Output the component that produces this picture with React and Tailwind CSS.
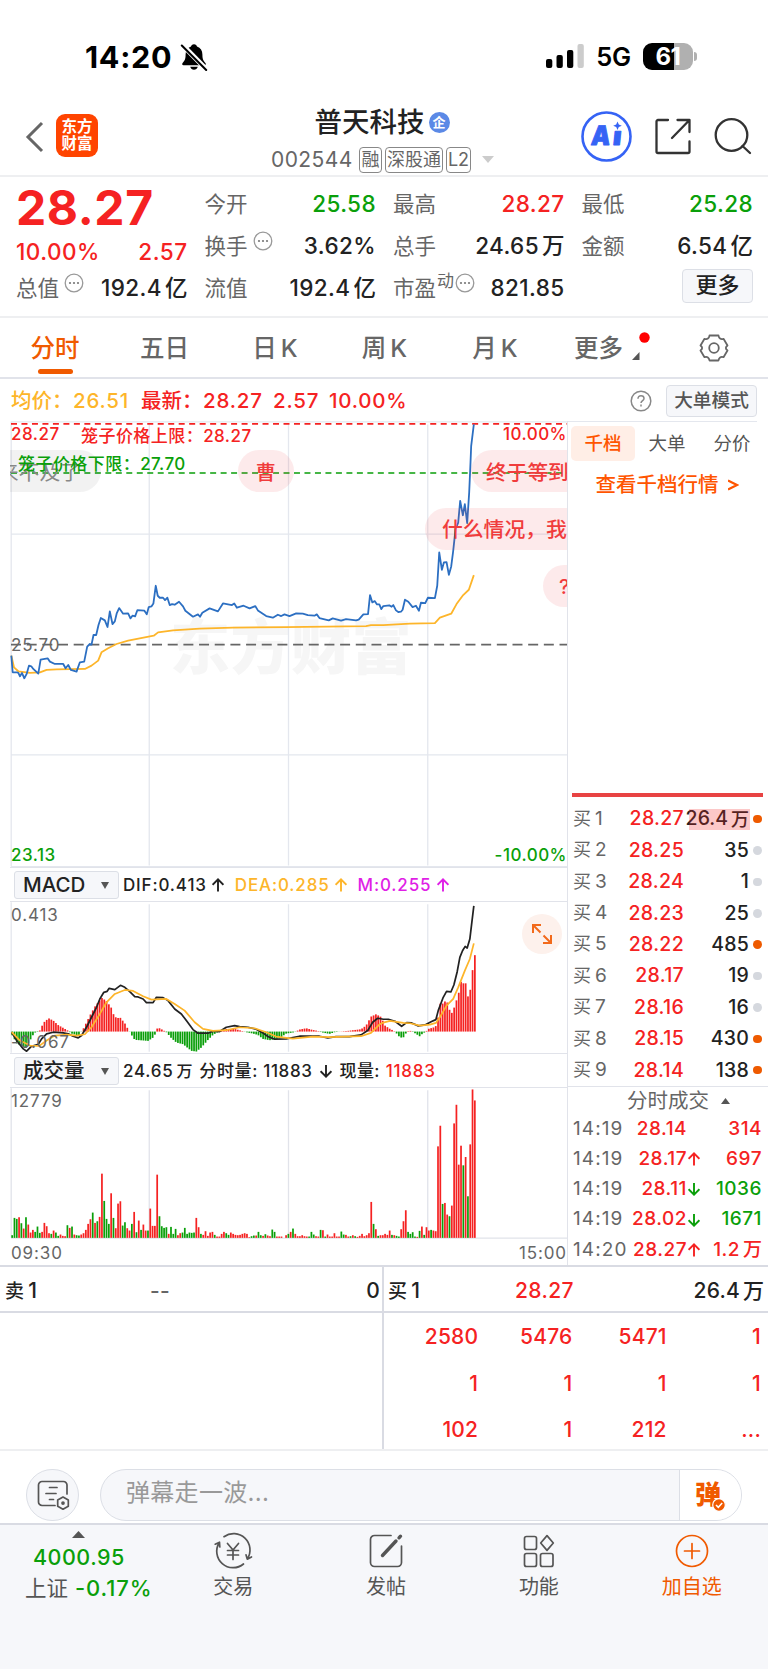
import React from "react";

const RED = "#f52222";
const GREEN = "#0a9f0a";

/* ---------- chart data (drawn in a 3x grid) ---------- */

const PRICE =
  "34,830 38,880 50,880 55,882 60,892 66,882 73,898 80,885 87,860 94,862 100,870 115,884 122,842 143,838 150,848 165,855 190,855 197,868 205,858 213,873 230,878 240,850 253,848 262,803 270,795 275,797 281,768 289,768 296,738 303,717 315,724 323,744 330,697 338,735 345,727 351,702 358,687 370,704 385,703 392,718 398,710 406,712 413,693 434,695 441,706 447,684 455,682 461,673 468,620 474,650 480,656 490,656 496,663 503,656 510,678 517,675 525,677 538,668 550,682 557,695 580,713 595,706 601,713 608,701 630,688 655,697 670,673 697,678 704,673 712,686 732,680 750,688 767,681 775,694 800,711 820,716 835,707 845,711 855,706 870,711 890,703 910,704 925,708 945,710 952,706 960,717 988,724 1000,718 1025,725 1040,720 1070,724 1078,722 1092,706 1106,705 1112,648 1119,670 1126,666 1133,676 1140,676 1146,690 1152,681 1170,679 1177,683 1182,678 1190,694 1197,699 1205,698 1210,692 1217,662 1227,668 1240,684 1250,680 1259,695 1265,671 1278,672 1286,656 1307,657 1314,620 1320,520 1328,572 1334,550 1342,549 1349,587 1356,562 1362,515 1369,450 1377,430 1383,365 1391,408 1397,375 1404,432 1410,340 1414,250 1416,200 1424,135";
const AVERAGE =
  "34,830 42,865 55,877 90,882 120,880 140,873 170,871 255,870 275,860 295,845 305,820 325,808 350,795 385,785 462,770 475,760 520,754 600,749 700,746 860,744 1100,741 1115,738 1152,738 1232,734 1307,732 1322,716 1356,704 1372,675 1392,648 1409,632 1424,588";
const DIF =
  "35,520 52,548 70,570 80,577 95,562 115,556 125,540 140,525 160,520 190,522 205,525 220,532 235,537 245,530 260,505 275,475 290,445 300,420 312,400 322,397 328,388 345,392 362,379 375,385 390,398 405,413 415,414 430,420 440,431 460,431 470,415 490,416 505,425 525,450 545,465 560,485 580,512 595,523 625,523 640,517 660,518 680,505 705,500 720,503 745,505 770,511 790,522 805,533 825,541 860,540 900,532 960,532 985,537 1010,533 1050,533 1085,528 1105,515 1120,490 1135,478 1152,481 1167,481 1187,487 1207,502 1222,491 1237,492 1257,501 1277,498 1297,488 1310,482 1317,455 1332,415 1342,397 1355,399 1364,378 1374,338 1382,295 1390,275 1398,262 1404,267 1412,240 1418,190 1424,140";
const DEA =
  "35,520 60,545 90,560 118,561 140,545 165,530 200,527 230,530 255,526 275,505 300,465 320,430 345,405 375,393 400,396 430,412 455,422 500,420 525,435 555,455 585,490 610,510 640,516 680,514 720,505 765,508 800,520 830,533 880,539 940,533 990,535 1085,532 1115,522 1140,497 1152,491 1172,486 1212,492 1232,493 1262,500 1292,497 1310,492 1322,475 1342,440 1362,420 1377,385 1397,335 1412,300 1424,253";

const HIST = [
  [36, -10], [50, -35], [77, -50], [84, -38], [98, -12], [105, -3], [118, 0], [125, 15], [132, 28], [146, 40],
  [160, 33], [174, 20], [188, 12], [202, 4], [215, -6], [236, -12], [243, -2], [250, 8], [257, 22], [271, 50],
  [285, 75], [298, 92], [306, 101], [320, 92], [334, 72], [341, 52], [350, 40], [361, 42], [375, 25], [382, 12],
  [389, 0], [395, -10], [405, -25], [420, -26], [445, -28], [460, -18], [468, -5], [472, 9], [480, 10], [492, 3],
  [500, -2], [515, -20], [530, -33], [550, -38], [575, -58], [590, -60], [605, -48], [625, -25], [640, -10], [652, -3],
  [665, 2], [680, 8], [705, 8], [720, 4], [740, -2], [760, -6], [775, -10], [790, -22], [810, -26], [840, -20],
  [860, -6], [885, -2], [900, 6], [920, 10], [935, 6], [955, 2], [965, -2], [990, -7], [1005, -2], [1030, 1],
  [1045, 2], [1060, 4], [1085, 7], [1100, 18], [1115, 45], [1130, 52], [1145, 44], [1157, 18], [1172, 8], [1184, 2],
  [1192, -6], [1202, -18], [1212, -18], [1220, -5], [1227, 2], [1234, 2], [1244, -3], [1261, -14], [1270, -6], [1280, 0],
  [1287, 8], [1302, 12], [1312, 18], [1316, 40], [1323, 84], [1330, 84], [1342, 95], [1349, 68], [1358, 56], [1366, 75],
  [1379, 118], [1385, 150], [1392, 145], [1400, 145], [1406, 105], [1413, 124], [1420, 184], [1428, 236],
];

const VOLUME =
  "g8 g60 g57 r62 g44 r28 g62 r40 r16 r24 g18 g34 g15 r18 r45 r35 r14 g12 r22 g16 g6 r10 r6 r5 g38 r30 g34 r10 g8 g7 r10 r14 r24 r42 r56 g76 r45 g50 r63 r193 g111 g57 g42 r134 g60 r29 r103 r110 g37 g47 r29 r22 g42 r78 g17 r52 g24 r40 r22 g22 r88 r36 r36 r190 g65 g35 g30 g32 r12 g33 g12 g27 r8 r14 g16 g30 g12 g16 g15 g16 r60 r32 g12 r9 r20 r6 r16 r18 g9 r4 r4 r12 r18 g14 g9 r16 r12 r9 r8 r9 r12 r14 r12 r2 g5 g7 r7 g18 g8 r6 g11 r7 r5 g25 g18 r4 r4 r4 r0 r8 g12 r18 g28 r12 r5 r5 r8 r5 r4 g4 g18 g10 r5 r4 g24 r23 g4 r10 r4 r4 r14 r4 r4 g19 g10 r9 r4 g5 r8 g5 r3 r6 r12 r5 r8 r14 r108 g42 r26 g6 r8 r8 r12 r9 r22 g9 r8 g6 g4 r26 r50 r83 g18 g12 g17 g4 r3 g21 r34 g9 r32 r22 g24 r22 r20 r275 r337 g102 r105 r70 g65 r97 r344 r400 r220 r277 g218 r243 g125 r281 r446 r413"
    .split(" ")
    .map((s) => ({ up: s[0] === "r", h: Number(s.slice(1)) }));

function histAt(x) {
  for (let i = 1; i < HIST.length; i++) {
    const [x1, v1] = HIST[i];
    if (x <= x1) {
      const [x0, v0] = HIST[i - 1];
      return v0 + ((v1 - v0) * (x - x0)) / (x1 - x0);
    }
  }
  return HIST[HIST.length - 1][1];
}

/* ---------- small pieces ---------- */

function Unit({ n, u }) {
  return (
    <span className="flex items-center">
      {n}
      <span className="ml-[3px] tracking-normal">{u}</span>
    </span>
  );
}

function Dots() {
  return (
    <svg className="mb-[10px] ml-[5px] h-5 w-5" viewBox="0 0 20 20">
      <circle cx="10" cy="10" r="8.8" fill="none" stroke="#999" strokeWidth="1.3" />
      <circle cx="6" cy="10" r="1.1" fill="#777" />
      <circle cx="10" cy="10" r="1.1" fill="#777" />
      <circle cx="14" cy="10" r="1.1" fill="#777" />
    </svg>
  );
}

function Stat({ label, children, extra, color = "text-[#222]" }) {
  return (
    <div className="flex h-[42px] items-center">
      <span className="text-[21.5px] text-[#666]">{label}</span>
      {extra}
      <span className={"ml-auto text-[22.5px] font-medium tracking-[0.4px] " + color}>{children}</span>
    </div>
  );
}

function Arrow({ down, className = "" }) {
  return (
    <svg className={"h-[14px] w-[12px] " + className} viewBox="0 0 12 14" fill="none" stroke="currentColor" strokeWidth="1.9">
      {down ? <path d="M6 1v11.500M.6 7.200L6 12.600l5.400-5.400" /> : <path d="M6 13.500V2M.6 6.800L6 1.400l5.400 5.400" />}
    </svg>
  );
}

function Selector({ label }) {
  return (
    <div className="ml-[4px] flex h-[28px] w-[105px] items-center justify-between rounded-[3px] border border-[#dcdfe6] bg-[#f6f7fa] pr-[9px] pl-2 text-[20.5px] font-medium tracking-normal text-[#222]">
      <span>{label}</span>
      <svg className="h-[7px] w-[8px]" viewBox="0 0 8 7">
        <path d="M0 0h8L4 7z" fill="#555" />
      </svg>
    </div>
  );
}

/* ---------- page sections ---------- */

function StatusBar() {
  return (
    <div className="flex h-[94px] items-center pt-[20px] pr-[71px] pl-[85px] text-black">
      <span className="text-[30.5px] font-bold tracking-[0.700px]">14:20</span>
      <svg className="ml-[8px] h-[28px] w-[28px]" viewBox="0 0 28 28">
        <path d="M14 1.2c-1.700 0-2.800 1-3 2.400C7.400 4.800 5.600 7.900 5.600 11.500c0 5-1.300 6.700-3 8.400-.8.900-.4 2.300.9 2.300h21c1.300 0 1.700-1.400.9-2.300-1.700-1.700-3-3.400-3-8.400 0-3.600-1.800-6.700-5.400-7.900-.2-1.400-1.300-2.400-3-2.400zM10.200 23.800c.6 1.900 2 3 3.800 3s3.200-1.100 3.800-3z" />
        <path d="M2 1.500l25 25.500" stroke="#fff" strokeWidth="5" />
        <path d="M1.800 2.500L26.200 27" stroke="#000" strokeWidth="2" strokeLinecap="round" />
      </svg>
      <svg className="ml-auto h-[26px] w-[38px]" viewBox="0 0 38 26">
        <rect x="0" y="15" width="6.300" height="9" rx="2" />
        <rect x="10.500" y="11" width="6.300" height="13" rx="2" />
        <rect x="21" y="6" width="6.300" height="18" rx="2" />
        <rect x="31.500" y="0" width="6.300" height="24" rx="2" fill="#ccc" />
      </svg>
      <span className="ml-[12px] text-[25.500px] font-semibold tracking-[-0.200px]">5G</span>
      <div className="ml-[12px] flex h-[27px] w-[50px] items-center justify-center rounded-[9px] bg-[linear-gradient(90deg,#000_62%,#b0b0b0_62%)] text-[24px] font-bold tracking-[-0.5px] text-white">
        61
      </div>
      <div className="ml-[1px] h-[9px] w-[3px] rounded-r-full bg-[#b0b0b0]" />
    </div>
  );
}

function Header() {
  return (
    <div className="flex h-[83px] border-b-2 border-[#eeeff1]">
      <div className="flex w-[271px] items-start pt-[20px] pl-[25px]">
        <svg className="mt-[7px] h-[32px] w-[19px]" viewBox="0 0 19 32" fill="none" stroke="#666" strokeWidth="3">
          <path d="M17 2L3 16l14 14" />
        </svg>
        <div className="ml-[12px] flex h-[43px] w-[42px] flex-col items-center justify-center rounded-[9px] bg-[#ff4400] text-[15.5px] leading-[17px] font-bold text-white">
          <span>东方</span>
          <span>财富</span>
        </div>
      </div>
      <div className="flex w-[226px] flex-col items-center">
        <div className="mt-[11px] ml-[-4px] flex h-[36px] items-center text-[27.500px] font-medium text-[#222]">
          普天科技
          <span className="ml-[4px] flex h-[21px] w-[21px] items-center justify-center rounded-full bg-[#5b89e6] text-[13px] font-bold text-white">企</span>
        </div>
        <div className="mt-[3px] flex w-full items-center text-[20px] text-[#666]">
          <span className="w-[88px] text-[21px] tracking-[0.400px]">002544</span>
          <span className="flex h-[26px] w-[23px] items-center justify-center rounded-[4px] border-[1.500px] border-[#888] text-[18px]">融</span>
          <span className="ml-[3px] flex h-[26px] w-[58px] items-center justify-center rounded-[4px] border-[1.500px] border-[#888] text-[18px]">深股通</span>
          <span className="ml-[3px] flex h-[26px] w-[25px] items-center justify-center rounded-[4px] border-[1.500px] border-[#888] text-[18px]">L2</span>
          <svg className="ml-[11px] h-[7px] w-[12px]" viewBox="0 0 12 7">
            <path d="M0 0h12L6 7z" fill="#ccc" />
          </svg>
        </div>
      </div>
      <div className="ml-auto flex items-start pt-[17px] pr-[16px]">
        <svg className="h-[51px] w-[51px]" viewBox="0 0 51 51">
          <circle cx="25.500" cy="25.500" r="24" fill="none" stroke="#3563f5" strokeWidth="2.600" />
          <g fill="#3563f5" stroke="#3563f5" strokeWidth="1" strokeLinejoin="round" className="font-black">
            <text x="13" y="34" fontSize="27" textLength="19" lengthAdjust="spacingAndGlyphs" transform="skewX(-6)">A</text>
            <text x="35" y="34.500" fontSize="25" textLength="8.500" lengthAdjust="spacingAndGlyphs" transform="skewX(-6)">ı</text>
          </g>
          <path d="M36.500 10.500l1.300 3 3 1.300-3 1.300-1.300 3-1.300-3-3-1.300 3-1.300z" fill="#3563f5" />
        </svg>
        <svg className="ml-[22px] mt-[7px] h-[38px] w-[38px]" viewBox="0 0 38 38" fill="none" stroke="#333" strokeWidth="2.300" strokeLinecap="round" strokeLinejoin="round">
          <path d="M14 2H4a1.500 1.500 0 0 0-1.500 1.500v30A1.500 1.500 0 0 0 4 35h30a1.500 1.500 0 0 0 1.500-1.500V23.500M23.500 2h12v12M35 2.500L18 20" />
        </svg>
        <svg className="ml-[22px] mt-[6px] h-[38px] w-[38px]" viewBox="0 0 38 38" fill="none" stroke="#333" strokeWidth="2.300" strokeLinecap="round">
          <circle cx="17.500" cy="18" r="15.800" />
          <path d="M28.500 29l7.500 7" />
        </svg>
      </div>
    </div>
  );
}

function Quote() {
  return (
    <div className="grid h-[141px] grid-cols-4 gap-x-[17px] border-b-2 border-[#eeeff1] pt-[6px] pr-[15px] pl-[16px]">
      <div>
        <div className="h-[49px] pt-px text-[48px] leading-[48px] font-bold tracking-[0.600px] text-[#f52222]">28.27</div>
        <div className="flex h-[35px] items-center justify-between pt-[6px] text-[22.500px] font-medium tracking-[0.500px] text-[#f52222]">
          <span>10.00%</span>
          <span>2.57</span>
        </div>
        <Stat label="总值" extra={<Dots />}>
          <Unit n="192.4" u="亿" />
        </Stat>
      </div>
      <div>
        <Stat label="今开" color="text-[#0a9f0a]">25.58</Stat>
        <Stat label="换手" extra={<Dots />}>3.62%</Stat>
        <Stat label="流值">
          <Unit n="192.4" u="亿" />
        </Stat>
      </div>
      <div>
        <Stat label="最高" color="text-[#f52222]">28.27</Stat>
        <Stat label="总手">
          <Unit n="24.65" u="万" />
        </Stat>
        <Stat
          label="市盈"
          extra={
            <>
              <span className="mb-[13px] ml-px text-[17px] text-[#666]">动</span>
              <span className="-ml-[4px] flex">
                <Dots />
              </span>
            </>
          }
        >
          821.85
        </Stat>
      </div>
      <div>
        <Stat label="最低" color="text-[#0a9f0a]">25.28</Stat>
        <Stat label="金额">
          <Unit n="6.54" u="亿" />
        </Stat>
        <div className="ml-auto mt-[2px] flex h-[34px] w-[71px] items-center justify-center rounded-[4px] border border-[#dcdfe6] bg-[#f6f7fa] text-[22px] font-medium text-[#222]">更多</div>
      </div>
    </div>
  );
}

function Tabs() {
  return (
    <div className="flex h-[62px] border-b-2 border-[#e1e3ea] text-[24.500px] font-medium text-[#666]">
      <div className="flex w-[110px] flex-col items-center pt-[12px] text-[#f05a00]">
        <span className="h-[36px] leading-[36px]">分时</span>
        <span className="mt-[3px] h-[5px] w-[35px] rounded-full bg-[#f05a00]" />
      </div>
      <span className="w-[109px] pt-[12px] text-center leading-[36px]">五日</span>
      <span className="w-[112px] pt-[12px] text-center leading-[36px]">日<span className="ml-[4px]">K</span></span>
      <span className="w-[107px] pt-[12px] text-center leading-[36px]">周<span className="ml-[4px]">K</span></span>
      <span className="w-[114px] pt-[12px] text-center leading-[36px]">月<span className="ml-[4px]">K</span></span>
      <div className="flex w-[147px] pt-[12px] pl-[22px]">
        <span className="leading-[36px]">更多</span>
        <svg className="ml-[9px] h-[30px] w-[18px]" viewBox="0 0 18 30">
          <circle cx="12.500" cy="7.500" r="5.200" fill="#f00" />
          <path d="M7.500 22v8H0z" fill="#555" />
        </svg>
      </div>
      <svg className="mt-[16px] h-[28px] w-[30px]" viewBox="0 0 30 28" fill="none" stroke="#666" strokeWidth="1.800" strokeLinejoin="round">
        <path d="M10.500 1.500h9c.4 3 2.200 4.200 5 3.300l4 6.700c-2.200 1.600-2.200 3.400 0 5l-4 6.700c-2.800-.9-4.600.3-5 3.300h-9c-.4-3-2.200-4.200-5-3.300l-4-6.700c2.200-1.600 2.200-3.400 0-5l4-6.700c2.800.9 4.600-.3 5-3.300z" />
        <circle cx="15" cy="14" r="4.800" />
      </svg>
    </div>
  );
}

function InfoRow() {
  return (
    <div className="flex h-[42px] items-center pt-px pl-[11px] text-[20.500px] font-medium text-[#f52222]">
      <span className="w-[62px] whitespace-nowrap text-[#fdb52a]">均价：</span>
      <span className="w-[68px] tracking-[0.800px] text-[#fdb52a]">26.51</span>
      <span className="w-[62px] whitespace-nowrap">最新：</span>
      <span className="w-[70px] tracking-[0.800px]">28.27</span>
      <span className="w-[56px] tracking-[0.800px]">2.57</span>
      <span className="tracking-[0.800px]">10.00%</span>
      <svg className="mr-px ml-auto h-[22px] w-[22px]" viewBox="0 0 22 22" fill="none" stroke="#888" strokeWidth="1.500">
        <circle cx="11" cy="11" r="9.800" />
        <path d="M8 8.700c0-1.900 1.200-3 3-3s3 1.100 3 2.700c0 2.200-3 2.200-3 4.700" />
        <path d="M11 14.600v1.800" />
      </svg>
      <div className="mr-[11px] ml-[13px] flex h-[32px] w-[91px] items-center justify-center rounded-[4px] border border-[#dcdfe6] bg-[#f6f7fa] text-[18.700px] text-[#555]">大单模式</div>
    </div>
  );
}

function PriceChart() {
  return (
    <div className="relative h-[446px] overflow-hidden text-[17px] leading-[20px] font-medium tracking-[0.500px]">
      <div className="absolute top-[192px] left-[160px] text-[60px] leading-[68px] font-black tracking-[0.500px] text-[#f6f6f6]">东方财富</div>
      <svg className="absolute inset-0 h-full w-full" viewBox="10 422 558 446">
        <g stroke="#e4e7ee" strokeWidth="1.300" fill="none">
          <path d="M11.200 422v446M149.500 425v442M289 425v442M428.500 425v442M11 535h557M11 756h557M11 422.500h557M11 868h557" />
        </g>
        <path d="M11 424.500h557" stroke={RED} strokeWidth="1.600" strokeDasharray="6 4.500" />
        <path d="M11 473.700h557" stroke={GREEN} strokeWidth="1.600" strokeDasharray="6 4.500" />
        <path d="M11 645.700h557" stroke="#666" strokeWidth="1.800" strokeDasharray="10 5.700" />
        <g transform="translate(0 380) scale(.333333)" fill="none" strokeWidth="5.400" strokeLinejoin="round">
          <polyline points={AVERAGE} stroke="#fdb52a" />
          <polyline points={PRICE} stroke="#2c6fc2" />
        </g>
      </svg>
      <div className="absolute top-[29px] -left-[20px] flex h-[42px] w-[111px] items-center justify-end rounded-full bg-black/5 pt-[3px] pr-[20px] text-[20.800px] font-normal tracking-normal text-[#888]">来不及了</div>
      <div className="absolute top-[29px] left-[228px] flex h-[42px] w-[56px] items-center justify-center rounded-full bg-[#f0333a]/10 pt-[3px] text-[20px] text-[#f03c3c]">曹</div>
      <div className="absolute top-[29px] left-[461px] flex h-[42px] w-[140px] items-center rounded-full bg-[#f0333a]/10 pt-[3px] pl-[15px] text-[20.700px] tracking-normal text-[#f03c3c]">终于等到</div>
      <div className="absolute top-[87px] left-[415px] flex h-[42px] w-[200px] items-center rounded-full bg-[#f0333a]/10 pt-[2px] pl-[17px] text-[20.800px] tracking-normal whitespace-nowrap text-[#f03c3c]">什么情况，我</div>
      <div className="absolute top-[144px] left-[533px] flex h-[42px] w-[60px] items-center rounded-full bg-[#f0333a]/10 pt-[2px] pl-[16px] text-[20px] text-[#f03c3c]">?</div>
      <span className="absolute top-[3px] left-[1px] text-[#f52222]">28.27</span>
      <span className="absolute top-[5px] left-[71px] tracking-[0.450px] whitespace-nowrap text-[#f52222]">笼子价格上限：28.27</span>
      <span className="absolute top-[33px] left-[8px] tracking-[0.450px] whitespace-nowrap text-[#0a9f0a]">笼子价格下限：27.70</span>
      <span className="absolute top-[3px] right-0 text-[#f52222]">10.00%</span>
      <span className="absolute top-[214px] left-[1px] font-normal tracking-[0.900px] text-[#666]">25.70</span>
      <span className="absolute bottom-[2px] left-[1px] text-[#0a9f0a]">23.13</span>
      <span className="absolute right-0 bottom-[2px] text-[#0a9f0a]">-10.00%</span>
    </div>
  );
}

function MacdPanel() {
  const bars = [];
  for (let i = 0; i < 202; i++) {
    const x = 36.5 + 6.918 * i;
    bars.push({ x, v: histAt(x) });
  }
  return (
    <>
      <div className="flex h-[35px] items-center border-y-[1.500px] border-[#e1e3ea] pt-px text-[17px] font-medium tracking-[0.850px] text-[#222]">
        <Selector label="MACD" />
        <span className="ml-[4px]">DIF:0.413</span>
        <Arrow className="ml-[5px]" />
        <span className="ml-[11px] text-[#fdb52a]">DEA:0.285</span>
        <Arrow className="ml-[5px] text-[#fdb52a]" />
        <span className="ml-[11px] text-[#df1fe6]">M:0.255</span>
        <Arrow className="ml-[6px] text-[#df1fe6]" />
      </div>
      <div className="relative h-[151px] text-[17px] leading-[20px] tracking-[0.900px] text-[#666]">
        <svg className="absolute inset-0 h-full w-full" viewBox="10 903 558 151">
          <path d="M11.200 903v151M149.500 905v148M289 905v148M428.500 905v148" stroke="#e4e7ee" strokeWidth="1.300" />
          <g transform="translate(0 860) scale(.333333)">
            {bars.map((b, i) => (
              <rect key={i} x={b.x - 2.5} width="5.200" y={b.v > 0 ? 518 - b.v : 518} height={Math.abs(b.v)} fill={b.v > 0 ? RED : GREEN} />
            ))}
            <g fill="none" strokeWidth="5.200" strokeLinejoin="round">
              <polyline points={DIF} stroke="#222" />
              <polyline points={DEA} stroke="#fdb52a" />
            </g>
          </g>
        </svg>
        <span className="absolute top-[3px] left-[1px]">0.413</span>
        <span className="absolute bottom-[1px] left-[1px]">-0.067</span>
        <div className="absolute top-[12px] right-[5px] flex h-[40px] w-[40px] items-center justify-center rounded-full bg-[#fdf1ec]">
          <svg className="h-5 w-5" viewBox="0 0 20 20" fill="none" stroke="#f26a1b" strokeWidth="2">
            <path d="M1 9V1h8M1.500 1.500l7 7M19 11v8h-8M18.500 18.500l-7-7" />
          </svg>
        </div>
      </div>
    </>
  );
}

function VolumePanel() {
  return (
    <>
      <div className="flex h-[35px] items-center border-y-[1.500px] border-[#e1e3ea] pt-px text-[17px] font-medium tracking-[0.750px] whitespace-nowrap text-[#222]">
        <Selector label="成交量" />
        <span className="ml-[4px]">24.65</span>
        <span className="ml-[3px] text-[16px]">万</span>
        <span className="ml-[6px] tracking-[0.650px]">分时量: 11883</span>
        <Arrow down className="ml-[7px]" />
        <span className="ml-[8px] tracking-[0.300px]">现量:</span>
        <span className="ml-[6px] text-[#f52222]">11883</span>
      </div>
      <div className="relative h-[151px] text-[17px] leading-[20px] tracking-[0.900px] text-[#666]">
        <svg className="absolute inset-0 h-full w-full" viewBox="10 1089 558 151">
          <path d="M11.200 1089v150M149.500 1091v148M289 1091v148M428.500 1091v148M11 1239.300h557" stroke="#e1e3ea" strokeWidth="1.300" />
          <g transform="translate(0 1050) scale(.333333)">
            {VOLUME.map((b, i) => (
              <rect key={i} x={36.5 + 6.918 * i - 2.6} width="5.200" y={567 - b.h} height={b.h} fill={b.up ? RED : GREEN} />
            ))}
          </g>
        </svg>
        <span className="absolute top-[3px] left-[1px]">12779</span>
      </div>
      <div className="flex h-[26px] items-center justify-between pt-[2px] pl-[1px] text-[17px] tracking-[0.900px] text-[#666]">
        <span>09:30</span>
        <span>15:00</span>
      </div>
    </>
  );
}

const BIDS = [
  ["1", "28.27", "26.4", true],
  ["2", "28.25", "35", false],
  ["3", "28.24", "1", false],
  ["4", "28.23", "25", false],
  ["5", "28.22", "485", true],
  ["6", "28.17", "19", false],
  ["7", "28.16", "16", false],
  ["8", "28.15", "430", true],
  ["9", "28.14", "138", true],
];

const TICKS = [
  ["14:19", "28.14", "", "314", false],
  ["14:19", "28.17", "up", "697", false],
  ["14:19", "28.11", "down", "1036", true],
  ["14:19", "28.02", "down", "1671", true],
  ["14:20", "28.27", "up", "1.2", false],
];

function SidePanel() {
  return (
    <div className="flex h-[844px] w-[200px] flex-col">
      <div className="mr-[5px] shrink-0">
        <div className="mr-[6px] border-t-[1.500px] border-[#e4e7ee]" />
        <div className="flex h-[39px] items-end pl-[3px] text-[18.500px] text-[#555]">
          <span className="flex h-[35px] w-[64px] items-center justify-center rounded-[5px] bg-[#ffeee6] font-medium text-[#ff5500]">千档</span>
          <span className="flex h-[35px] w-[64px] items-center justify-center">大单</span>
          <span className="flex h-[35px] w-[64px] items-center justify-center pl-[2px]">分价</span>
        </div>
      </div>
      <div className="flex h-[46px] shrink-0 items-center justify-center pt-px pr-[2px] text-[20.500px] font-medium text-[#ff5500]">
        <span>查看千档行情</span>
        <svg className="ml-[9px] h-[12px] w-[11px]" viewBox="0 0 11 12" fill="none" stroke="#ff5500" strokeWidth="2.200">
          <path d="M0 1.500l9 4.500-9 4.500" />
        </svg>
      </div>
      <div className="mt-[286px] ml-[4px] h-[4px] w-[191px] shrink-0 bg-[#e84343]" />
      <div className="mt-[6px] shrink-0">
        {BIDS.map(([n, price, qty, hot], i) => (
          <div key={n} className="flex h-[31.400px] items-center pl-[5px]">
            <span className="w-[40px] text-[18px] text-[#666]">
              买<span className="ml-[4px] text-[19px]">{n}</span>
            </span>
            <span className="w-[71px] text-right text-[19.500px] font-medium tracking-[0.300px] text-[#f52222]">{price}</span>
            <span className="relative flex w-[65px] items-center justify-end text-[19.500px] font-medium tracking-[0.200px] whitespace-nowrap text-[#222]">
              {i === 0 ? (
                <span className="flex items-center tracking-normal">
                  {qty}
                  <span className="ml-[3px] text-[18px]">万</span>
                </span>
              ) : (
                qty
              )}
              {i === 0 && <span className="absolute -right-px h-[21px] w-[61px] bg-[#f52222]/25" />}
            </span>
            <span className={"ml-[4px] h-[8.500px] w-[8.500px] rounded-full " + (hot ? "bg-[#ee5a00]" : "bg-[#d5d8de]")} />
          </div>
        ))}
      </div>
      <div className="shrink-0 border-t-[1.500px] border-[#e1e3ea]">
        <div className="flex h-[27px] items-center pt-px pl-[59px] text-[20.500px] text-[#666]">
          分时成交
          <svg className="ml-[12px] h-[6px] w-[9px]" viewBox="0 0 9 6">
            <path d="M4.500 0L9 6H0z" fill="#555" />
          </svg>
        </div>
        {TICKS.map(([t, p, dir, q, down], i) => (
          <div key={i} className="flex h-[30.200px] items-center pl-[5px] text-[19px] font-medium tracking-[0.500px]">
            <span className="w-[51px] font-normal tracking-[1.100px] text-[#666]">{t}</span>
            <span className="w-[63px] text-right">
              <span className="text-[#f52222]">{p}</span>
            </span>
            <span className="w-[14px]">
              {dir && <Arrow down={dir === "down"} className={dir === "down" ? "ml-px text-[#0a9f0a]" : "ml-px text-[#f52222]"} />}
            </span>
            <span className={"flex w-[61px] justify-end " + (down ? "text-[#0a9f0a]" : "text-[#f52222]")}>{i === 4 ? <Unit n={q} u="万" /> : q}</span>
          </div>
        ))}
      </div>
    </div>
  );
}

function OrderBook() {
  const cells = ["2580", "5476", "5471", "1", "1", "1", "1", "1", "102", "1", "212", "..."];
  return (
    <div className="flex h-[186px] border-t-2 border-b-2 border-t-[#d9dbe3] border-b-[#eeeff1] text-[21px] font-medium tracking-[0.200px] text-[#222]">
      <div className="w-[384px] border-r-2 border-[#d9dbe3]">
        <div className="flex h-[46px] items-center border-b-2 border-[#d9dbe3] pt-[2px] pr-[2px] pl-[5px]">
          <span className="w-[145px] text-[19px]">卖<span className="ml-[4px] text-[21px]">1</span></span>
          <span className="text-[#666]">--</span>
          <span className="ml-auto">0</span>
        </div>
      </div>
      <div className="flex-1">
        <div className="flex h-[46px] items-center border-b-2 border-[#d9dbe3] pt-[2px] pr-[4px] pl-[4px]">
          <span className="w-[127px] text-[19px]">买<span className="ml-[4px] text-[21px]">1</span></span>
          <span className="tracking-[0.400px] text-[#f52222]">28.27</span>
          <span className="ml-auto"><Unit n="26.4" u="万" /></span>
        </div>
        <div className="grid grid-cols-4 pt-px pr-[7px] text-right text-[#f52222]">
          {cells.map((c, i) => (
            <span key={i} className="h-[46.300px] leading-[46.300px]">{c}</span>
          ))}
        </div>
      </div>
    </div>
  );
}

function CommentBar() {
  return (
    <div className="flex h-[72px] items-center pt-[15px] pl-[26px]">
      <div className="flex h-[52px] w-[53px] items-center justify-center rounded-full border-[1.500px] border-[#dcdfe6] bg-[#f6f7fa]">
        <svg className="mt-px ml-[3px] h-[30px] w-[34px]" viewBox="0 0 34 30" fill="none" stroke="#555" strokeWidth="1.700" strokeLinecap="round" strokeLinejoin="round">
          <path d="M18 25.500H5A3.500 3.500 0 0 1 1.500 22V5A3.500 3.500 0 0 1 5 1.500h21.500A3.500 3.500 0 0 1 30 5v9" />
          <path d="M12.500 7.500h7.500M9 13.500h10M12.500 19.500h4" />
          <path d="M26 17l5.300 3v6.200L26 29.200l-5.300-3V20z" />
          <circle cx="26" cy="23.100" r="1" fill="#555" />
        </svg>
      </div>
      <div className="ml-[21px] flex h-[52px] w-[642px] overflow-hidden rounded-full border-[1.500px] border-[#dcdfe6] bg-[#f6f7fa]">
        <span className="flex-1 pl-[25px] text-[24px] leading-[45px] tracking-[0.300px] text-[#999]">弹幕走一波...</span>
        <div className="flex w-[62px] items-center border-l-[1.500px] border-[#dcdfe6] bg-white pl-[15px]">
          <span className="text-[26px] leading-none font-black text-[#f05a00]">弹</span>
          <svg className="mt-[21px] -ml-[9px] h-[14px] w-[14px]" viewBox="0 0 14 14">
            <circle cx="7" cy="7" r="6.300" fill="#f05a00" stroke="#fff" strokeWidth="1.200" />
            <path d="M4 7l2.300 2.300L10.200 5" fill="none" stroke="#fff" strokeWidth="1.500" />
          </svg>
        </div>
      </div>
    </div>
  );
}

function NavItem({ label, active, children }) {
  return (
    <div className={"flex w-[152.800px] flex-col items-center text-[20px] " + (active ? "text-[#f05a00]" : "text-[#555]")}>
      <svg className="mt-[8px] h-[36px] w-[36px] overflow-visible" viewBox="0 0 36 36" fill="none" stroke="currentColor" strokeWidth="1.700" strokeLinecap="round" strokeLinejoin="round">
        {children}
      </svg>
      <span className="mt-[4px] leading-[28px]">{label}</span>
    </div>
  );
}

function BottomNav() {
  return (
    <div className="flex h-[146px] border-t-2 border-[#d9dbe3] bg-[#f6f7fa]">
      <div className="flex w-[157px] flex-col">
        <svg className="mt-[6px] ml-[72px] h-[7px] w-[13px]" viewBox="0 0 13 7">
          <path d="M6.500 0L13 7H0z" fill="#555" />
        </svg>
        <span className="mt-[3px] pl-[33px] text-[21.500px] leading-[32px] font-medium tracking-[0.500px] text-[#0a9f0a]">4000.95</span>
        <span className="flex items-center pl-[25px] text-[21.500px] leading-[30px] whitespace-nowrap text-[#555]">
          上证<span className="ml-[7px] text-[22px] font-medium tracking-[0.900px] text-[#0a9f0a]">-0.17%</span>
        </span>
      </div>
      <NavItem label="交易">
        <path d="M9 3.700A16.400 16.400 0 0 1 32.300 26M36.500 24L32.300 26.200 31 21.800" />
        <path d="M28.500 31A16.400 16.400 0 0 1 4.300 9.500M.2 11.200l4.300-2 .3 4.800" />
        <path d="M12.500 10.500l5.500 6.500 5.500-6.500M18 17v9.500M12.500 17.500h11M12.500 22h11" />
      </NavItem>
      <NavItem label="发帖">
        <path d="M23 2.500H6.500a4 4 0 0 0-4 4v23a4 4 0 0 0 4 4h23a4 4 0 0 0 4-4V13" />
        <path d="M14.500 22.500L28 8M31 4.800L32.500 3.200" strokeWidth="3.400" />
      </NavItem>
      <NavItem label="功能">
        <rect x="3.500" y="3.500" width="12" height="13" rx="2" />
        <rect x="3.500" y="20.500" width="12" height="13" rx="2" />
        <rect x="19.500" y="20.500" width="12.500" height="13" rx="2" />
        <path d="M26 2.600l6.300 7.400-6.300 7.400-6.300-7.400z" />
      </NavItem>
      <NavItem label="加自选" active>
        <circle cx="18" cy="18" r="15.500" />
        <path d="M18 10.500v15M10.500 18h15" />
      </NavItem>
    </div>
  );
}

export default function App() {
  return (
    <div className="flex h-[1669px] w-[768px] flex-col overflow-hidden bg-white font-['Inter','Noto_Sans_CJK_SC',sans-serif]">
      <StatusBar />
      <Header />
      <Quote />
      <Tabs />
      <InfoRow />
      <div className="flex h-[844px]">
        <div className="h-[844px] w-[568px] border-r-[1.500px] border-[#e1e3ea] pl-[10px]">
          <PriceChart />
          <MacdPanel />
          <VolumePanel />
        </div>
        <SidePanel />
      </div>
      <OrderBook />
      <CommentBar />
      <BottomNav />
    </div>
  );
}
